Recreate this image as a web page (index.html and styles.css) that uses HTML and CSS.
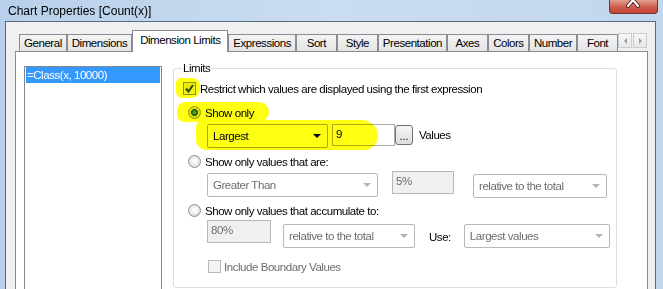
FILE: index.html
```html
<!DOCTYPE html>
<html lang="en">
<head>
  <meta charset="UTF-8">
  <meta name="viewport" content="width=device-width, initial-scale=1.0">
  <title>Chart Properties [Count(x)]</title>

  <!-- Styles -->
  <link rel="stylesheet" href="styles.css">
</head>
<body>

  <!-- Title bar -->
  <div class="titlebar">
    <span class="title">Chart Properties [Count(x)]</span>
    <div class="close-btn">
      <svg width="47" height="13" viewBox="0 0 47 13">
        <path d="M18 -6 L28 6 M28 -6 L18 6" stroke="#5a1f19" stroke-width="4" stroke-linecap="round"/>
        <path d="M18 -6 L28 6 M28 -6 L18 6" stroke="#fff" stroke-width="2.2" stroke-linecap="round"/>
      </svg>
    </div>
  </div>

  <div class="client">

    <!-- Tabs -->
    <div class="tabs">
      <div class="tab">General</div>
      <div class="tab">Dimensions</div>
      <div class="tab active">Dimension Limits</div>
      <div class="tab">Expressions</div>
      <div class="tab">Sort</div>
      <div class="tab">Style</div>
      <div class="tab">Presentation</div>
      <div class="tab">Axes</div>
      <div class="tab">Colors</div>
      <div class="tab">Number</div>
      <div class="tab">Font</div>
      <div class="tab-scroll">
        <span class="scroll-btn"><span class="tri tri-left"></span></span>
        <span class="scroll-btn"><span class="tri tri-right"></span></span>
      </div>
    </div>

    <!-- Tab page -->
    <div class="panel">
      <div class="listbox">
        <div class="list-item selected">=Class(x, 10000)</div>
      </div>

      <fieldset class="group">
        <legend>Limits</legend>

        <div class="row opt-row row-a">
          <span class="checkbox checked">
            <svg width="11" height="11" viewBox="0 0 11 11"><path d="M2 5.5 L4.5 8.5 L9 2" fill="none" stroke="#2a4a8c" stroke-width="2"/></svg>
          </span>
          <span class="label">Restrict which values are displayed using the first expression</span>
        </div>

        <div class="row opt-row row-b">
          <span class="radio checked"></span>
          <span class="label">Show only</span>
        </div>

        <div class="row ctl-row row-c">
          <div class="combo combo-largest"><span>Largest</span><span class="arrow"></span></div>
          <div class="textbox tb-count">9</div>
          <div class="dots-btn">...</div>
          <span class="label values-label">Values</span>
        </div>

        <div class="row opt-row row-d">
          <span class="radio"></span>
          <span class="label">Show only values that are:</span>
        </div>

        <div class="row ctl-row row-e">
          <div class="combo disabled combo-greater"><span>Greater Than</span><span class="arrow"></span></div>
          <div class="textbox disabled tb-pct">5%</div>
          <div class="combo disabled combo-rel1"><span>relative to the total</span><span class="arrow"></span></div>
        </div>

        <div class="row opt-row row-f">
          <span class="radio"></span>
          <span class="label">Show only values that accumulate to:</span>
        </div>

        <div class="row ctl-row row-g">
          <div class="textbox disabled tb-acc">80%</div>
          <div class="combo disabled combo-rel2"><span>relative to the total</span><span class="arrow"></span></div>
          <span class="label use-label">Use:</span>
          <div class="combo disabled combo-use"><span>Largest values</span><span class="arrow"></span></div>
        </div>

        <div class="row opt-row row-h">
          <span class="checkbox disabled"></span>
          <span class="label muted">Include Boundary Values</span>
        </div>
      </fieldset>

      <!-- highlighter marks -->
      <span class="marker marker-check"></span>
      <span class="marker marker-show"></span>
      <span class="marker marker-combo"></span>
    </div>
  </div>

</body>
</html>
```

FILE: styles.css
```css
body {
  margin: 0;
  width: 663px;
  height: 289px;
  overflow: hidden;
  background: linear-gradient(to right, #b9d0ea, #cadcf1 50%, #c2d6ed);
  font-family: "Liberation Sans", Arial, sans-serif;
  font-size: 11.5px;
  letter-spacing: -0.45px;
  color: #000;
}

/* title bar */

.titlebar {
  display: flex;
  height: 21px;
  padding-left: 8px;
}

.title {
  font-size: 12px;
  letter-spacing: 0;
  line-height: 23px;
}

.close-btn {
  margin-left: auto;
  margin-right: 5px;
  width: 47px;
  height: 13px;
  border: 1px solid #70342c;
  border-top: none;
  border-radius: 0 0 4px 4px;
  background: linear-gradient(#e2a193, #cf5a4c 55%, #c24637);
}

.close-btn svg {
  display: block;
}

/* dialog body */

.client {
  margin: 0 7px 0 5px;
  height: 300px;
  border: 1px solid #5a6b80;
  background-color: #f0f0f0;
}

.tabs {
  position: relative;
  z-index: 1;
  display: flex;
  align-items: flex-end;
  height: 29px;
  padding: 0 8px 0 13px;
}

.tab {
  min-width: 31px;
  height: 16px;
  line-height: 17px;
  padding: 0 4px;
  border: 1px solid #898c95;
  border-bottom: none;
  background: linear-gradient(#f3f3f3, #e5e5e5);
  text-align: center;
  white-space: nowrap;
}

.tab.active {
  height: 21px;
  line-height: 19px;
  padding: 0 7px;
  margin-bottom: -1px;
  background: #fff;
}

.tab-scroll {
  display: flex;
  align-self: flex-start;
  margin-top: 11px;
  margin-left: auto;
  gap: 1px;
}

.scroll-btn {
  display: flex;
  align-items: center;
  justify-content: center;
  width: 12px;
  height: 13px;
  border: 1px solid #c9ccd1;
  background: linear-gradient(#f8f8f8, #e8e8e8);
}

.tri {
  width: 0;
  height: 0;
  border-top: 3px solid transparent;
  border-bottom: 3px solid transparent;
}

.tri-left {
  border-right: 3px solid #9a9a9a;
}

.tri-right {
  border-left: 3px solid #9a9a9a;
}

.panel {
  position: relative;
  display: flex;
  align-items: flex-start;
  height: 260px;
  margin: 0 7px 0 9px;
  padding: 9px 0 0 8px;
  border: 1px solid #898c95;
  background-color: #fff;
}

.listbox {
  flex: none;
  width: 136px;
  height: 240px;
  margin-top: 5px;
  border: 1px solid #828790;
}

.list-item {
  height: 16px;
  line-height: 16px;
  margin: 0 1px;
  padding-left: 1px;
}

.list-item.selected {
  background-color: #3399ff;
  color: #fff;
}

/* Limits group */

.group {
  box-sizing: border-box;
  flex: none;
  width: 444px;
  height: 227px;
  margin: 0 0 0 11px;
  padding: 0;
  border: 1px solid #d5dfe5;
  border-radius: 3px;
}

.group legend {
  margin-left: 8px;
  padding: 0 1px;
  line-height: 14px;
}

.row {
  display: flex;
}

.opt-row {
  height: 15px;
  align-items: center;
}

.ctl-row {
  align-items: flex-start;
}

.row-a { margin-top: 6px; padding-left: 9px; }
.row-b { margin-top: 9px; padding-left: 14px; }
.row-c { margin-top: 3px; padding-left: 33px; height: 25px; }
.row-d { margin-top: 6px; padding-left: 14px; }
.row-e { margin-top: 2px; padding-left: 33px; height: 27px; }
.row-f { margin-top: 5px; padding-left: 14px; }
.row-g { margin-top: 2px; padding-left: 33px; height: 27px; }
.row-h { margin-top: 12px; padding-left: 34px; }

.label {
  white-space: nowrap;
}

.label.muted {
  color: #6d6d6d;
}

.checkbox {
  box-sizing: border-box;
  display: flex;
  align-items: center;
  justify-content: center;
  width: 13px;
  height: 13px;
  margin-right: 4px;
  border: 1px solid #8e8f8f;
  background: linear-gradient(135deg, #dcdcdc, #fbfbfb);
  box-shadow: inset 0 0 0 1px #f4f4f4;
}

.checkbox.disabled {
  border-color: #b9b9b9;
  background: #f4f4f4;
  margin-right: 3px;
}

.radio {
  box-sizing: border-box;
  width: 13px;
  height: 13px;
  margin-right: 4px;
  border: 1px solid #8e8f8f;
  border-radius: 50%;
  background: radial-gradient(circle at 50% 45%, #fbfbfb 20%, #dadada 75%);
}

.radio.checked {
  background: radial-gradient(circle, #74b8f0 0, #2f6fb8 30%, #1c4f8e 42%, #e6e6e6 48%, #d6d6d6 80%);
}

/* inputs */

.combo {
  box-sizing: border-box;
  display: flex;
  align-items: center;
  justify-content: space-between;
  height: 24px;
  margin-top: 1px;
  padding: 0 6px 0 5px;
  border: 1px solid #a8a8a8;
  border-radius: 2px;
  background: #fff;
  white-space: nowrap;
}

.combo .arrow {
  width: 0;
  height: 0;
  border-left: 4px solid transparent;
  border-right: 4px solid transparent;
  border-top: 4px solid #000;
}

.combo.disabled {
  color: #6d6d6d;
  border-color: #b5b8bb;
}

.combo.disabled .arrow {
  border-top-color: #b4b4b4;
}

.textbox {
  box-sizing: border-box;
  height: 22px;
  padding: 2px 0 0 3px;
  line-height: 14px;
  border: 1px solid #abadb3;
  background: #fff;
}

.textbox.disabled {
  height: 23px;
  color: #6d6d6d;
  border-color: #b5b8bb;
  background: #f0f0f0;
}

.combo-largest { width: 121px; }
.tb-count { width: 63px; margin: 1px 0 0 4px; }

.dots-btn {
  box-sizing: border-box;
  width: 18px;
  height: 20px;
  margin-top: 2px;
  border: 1px solid #707070;
  border-radius: 3px;
  background: linear-gradient(#f6f6f6, #dddddd);
  text-align: center;
  line-height: 20px;
  font-size: 11px;
  letter-spacing: 0;
}

.values-label {
  margin: 5px 0 0 6px;
  line-height: 14px;
}

.combo-greater { width: 171px; margin-top: 2px; }
.tb-pct { width: 62px; margin-left: 14px; }
.combo-rel1 { width: 134px; margin: 3px 0 0 19px; }

.tb-acc { width: 64px; }
.combo-rel2 { width: 132px; margin: 4px 0 0 12px; }
.use-label { margin: 10px 0 0 14px; line-height: 14px; }
.combo-use { width: 146px; margin: 4px 0 0 13px; }

/* highlighter */

.marker {
  position: absolute;
  background-color: #ffff14;
  mix-blend-mode: multiply;
}

.marker-check {
  left: 160px;
  top: 26px;
  width: 24px;
  height: 20px;
  border-radius: 5px 8px 9px 6px;
}

.marker-show {
  left: 161px;
  top: 50px;
  width: 92px;
  height: 20px;
  border-radius: 9px 11px 11px 8px;
}

.marker-combo {
  left: 180px;
  top: 68px;
  width: 182px;
  height: 30px;
  border-radius: 8px 16px 14px 10px;
}
```
